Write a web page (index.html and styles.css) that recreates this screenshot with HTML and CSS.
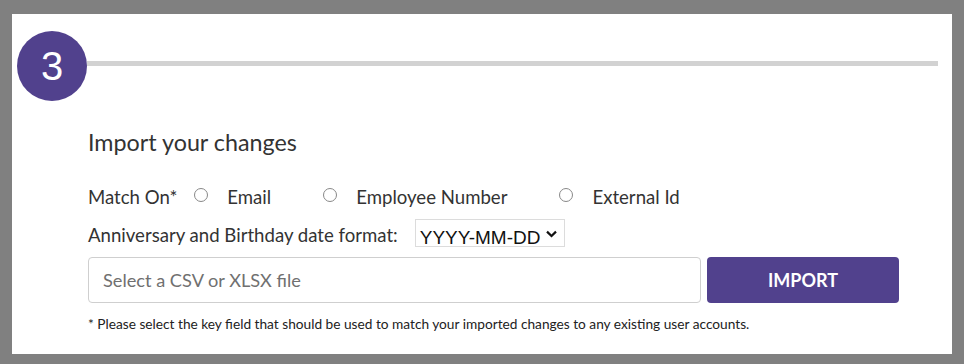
FILE: index.html
```html
<!DOCTYPE html>
<html lang="en">
<head>
<meta charset="utf-8">
<title>Import your changes</title>
<link rel="stylesheet" href="styles.css">
</head>
<body>
<div class="panel">
  <div class="step-header">
    <div class="step-badge">3</div>
    <div class="step-line"></div>
  </div>
  <div class="content">
    <h2 class="title">Import your changes</h2>
    <div class="row match-row">
      <span class="label">Match On*</span>
      <label class="radio radio-email"><span class="radio-dot"></span>Email</label>
      <label class="radio radio-emp"><span class="radio-dot"></span>Employee Number</label>
      <label class="radio radio-ext"><span class="radio-dot"></span>External Id</label>
    </div>
    <div class="row date-row">
      <span class="label date-label">Anniversary and Birthday date format:</span>
      <div class="select">
        <span class="select-text">YYYY-MM-DD</span>
        <svg class="chevron" width="13" height="8" viewBox="0 0 13 8"><path d="M2 1.6 L6.5 6 L11 1.6" fill="none" stroke="#111" stroke-width="2.2"/></svg>
      </div>
    </div>
    <div class="row file-row">
      <div class="file-input">Select a CSV or XLSX file</div>
      <button class="btn-import">IMPORT</button>
    </div>
    <p class="note">* Please select the key field that should be used to match your imported changes to any existing user accounts.</p>
  </div>
</div>
</body>
</html>
```

FILE: styles.css
```css
html, body {
  margin: 0;
  padding: 0;
  background: #808080;
}
body {
  padding: 14px 12px 10px 12px;
  font-family: "Lato", "Open Sans", sans-serif;
  color: #333;
}
.panel {
  background: #fff;
  width: 940px;
  height: 340px;
  box-sizing: border-box;
  padding-top: 17px;
}
.step-header {
  display: flex;
  align-items: flex-start;
  padding-left: 5px;
  padding-right: 14px;
}
.step-badge {
  width: 70px;
  height: 70px;
  border-radius: 50%;
  background: #51418d;
  color: #fff;
  font-family: "Liberation Sans", Arial, sans-serif;
  font-size: 40px;
  line-height: 70px;
  text-align: center;
  flex: none;
}
.step-line {
  flex: 1;
  height: 5px;
  margin-top: 30px;
  background: #d2d2d2;
}
.content {
  padding-left: 76px;
}
.title {
  margin: 27px 0 0 0;
  font-size: 23.3px;
  font-weight: 400;
  line-height: 29px;
  color: #333;
}
.row {
  display: flex;
  align-items: center;
}
.match-row {
  margin-top: 28px;
  height: 24px;
}
.label {
  font-size: 18.6px;
  line-height: 24px;
  color: #333;
}
.radio {
  display: flex;
  align-items: center;
  font-size: 18.6px;
  line-height: 24px;
  color: #333;
}
.radio-dot {
  width: 14px;
  height: 14px;
  border: 1px solid #888;
  border-radius: 50%;
  margin-right: 19px;
  box-sizing: border-box;
  margin-top: -4px;
}
.radio-email { margin-left: 17px; }
.radio-emp { margin-left: 52px; }
.radio-ext { margin-left: 52px; }
.date-row {
  margin-top: 10px;
  height: 28px;
  align-items: flex-start;
}
.date-label {
  margin-top: 4px;
}
.select {
  margin-left: 17px;
  width: 150px;
  height: 28px;
  box-sizing: border-box;
  border: 1px solid #dcdcdc;
  display: flex;
  align-items: flex-start;
  padding-left: 4px;
  overflow: hidden;
}
.select-text {
  font-family: "Liberation Sans", Arial, sans-serif;
  font-size: 19px;
  line-height: 22px;
  color: #111;
  margin-top: 7px;
}
.chevron {
  margin-left: 5px;
  margin-top: 10px;
  flex: none;
}
.file-row {
  margin-top: 10px;
  align-items: flex-start;
}
.file-input {
  width: 613px;
  height: 46px;
  box-sizing: border-box;
  border: 1px solid #cfcfcf;
  border-radius: 4px;
  padding-left: 14px;
  font-size: 18.2px;
  line-height: 44px;
  color: #707070;
}
.btn-import {
  margin-left: 6px;
  width: 192px;
  height: 46px;
  border: none;
  border-radius: 4px;
  background: #51418d;
  color: #fff;
  font-family: "Lato", sans-serif;
  font-weight: 700;
  font-size: 18px;
  padding: 0;
}
.note {
  margin: 12px 0 0 0;
  font-size: 13.7px;
  line-height: 18px;
  color: #222;
}
```
